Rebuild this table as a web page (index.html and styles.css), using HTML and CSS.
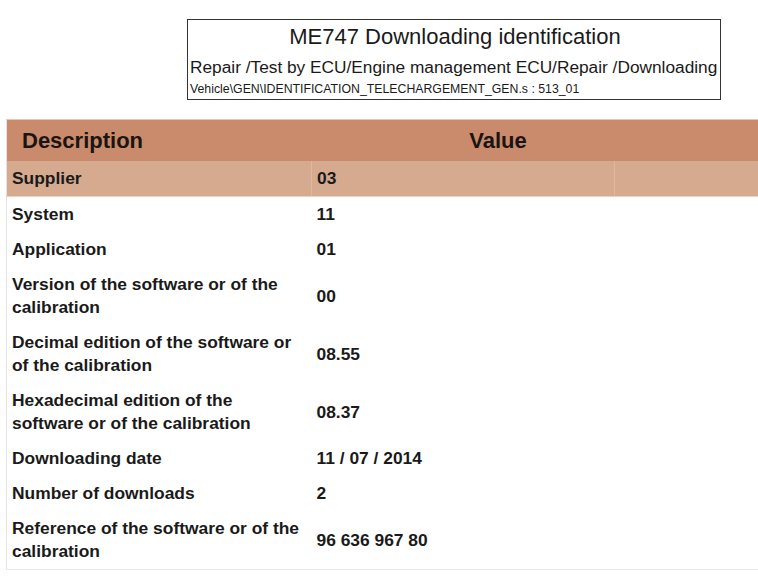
FILE: index.html
```html
<!DOCTYPE html>
<html>
<head>
<meta charset="utf-8">
<link rel="stylesheet" href="styles.css">
</head>
<body>
<div class="titlebox">
  <div class="title">ME747 Downloading identification</div>
  <div class="path">Repair /Test by ECU/Engine management ECU/Repair /Downloading</div>
  <div class="file">Vehicle\GEN\IDENTIFICATION_TELECHARGEMENT_GEN.s : 513_01</div>
</div>
<table class="data">
  <colgroup>
    <col class="col-desc">
    <col class="col-val">
    <col class="col-extra">
  </colgroup>
  <thead>
    <tr>
      <th class="h-desc">Description</th>
      <th class="h-val" colspan="2">Value</th>
    </tr>
  </thead>
  <tbody>
    <tr class="hl"><td class="c1">Supplier</td><td class="c2">03</td><td class="c3"></td></tr>
    <tr><td class="c1">System</td><td class="c2">11</td><td class="c3"></td></tr>
    <tr><td class="c1">Application</td><td class="c2">01</td><td class="c3"></td></tr>
    <tr><td class="c1">Version of the software or of the calibration</td><td class="c2">00</td><td class="c3"></td></tr>
    <tr><td class="c1">Decimal edition of the software or of the calibration</td><td class="c2">08.55</td><td class="c3"></td></tr>
    <tr><td class="c1">Hexadecimal edition of the software or of the calibration</td><td class="c2">08.37</td><td class="c3"></td></tr>
    <tr><td class="c1">Downloading date</td><td class="c2">11 / 07 / 2014</td><td class="c3"></td></tr>
    <tr><td class="c1">Number of downloads</td><td class="c2">2</td><td class="c3"></td></tr>
    <tr><td class="c1">Reference of the software or of the calibration</td><td class="c2">96 636 967 80</td><td class="c3"></td></tr>
  </tbody>
</table>
</body>
</html>
```
FILE: styles.css
```css
html, body {
  margin: 0;
  padding: 0;
  background: #ffffff;
  overflow: hidden;
}
body {
  font-family: "Liberation Sans", Arial, sans-serif;
  color: #111;
  padding-top: 19px;
}
.titlebox {
  box-sizing: border-box;
  margin-left: 187px;
  width: 534px;
  height: 81px;
  border: 1px solid #333;
  padding: 4px 0 3px 2px;
}
.title {
  font-size: 22px;
  line-height: 26px;
  text-align: center;
  color: #1a1a1a;
}
.path {
  font-size: 17.3px;
  line-height: 20px;
  margin-top: 7px;
  white-space: nowrap;
  color: #1a1a1a;
}
.file {
  font-size: 12.3px;
  line-height: 14px;
  margin-top: 5px;
  white-space: nowrap;
  color: #1a1a1a;
}
.data {
  margin-top: 19px;
  margin-left: 6px;
  width: 760px;
  border-collapse: collapse;
  table-layout: fixed;
  border-left: 1px solid #e4e4e4;
  border-bottom: 1px solid #e8e8e8;
}
.col-desc { width: 305px; }
.col-val { width: 303px; }
.col-extra { width: 152px; }
.data th {
  background: #c98b6b;
  font-size: 22px;
  line-height: 25px;
  padding: 8px 0;
  font-weight: bold;
  color: #1b1410;
  border-top: 1px solid #e9c7b2;
}
.h-desc {
  text-align: left;
  padding-left: 15px !important;
}
.h-val {
  text-align: center;
  padding-right: 82px !important;
}
.data td {
  font-size: 17.4px;
  line-height: 23px;
  padding: 6px 8px 6px 5px;
  font-weight: bold;
  color: #1a1a1a;
  vertical-align: middle;
}
.hl td {
  background: #d6aa8f;
  border-bottom: 1px solid #ecd2c2;
}
.hl .c2, .hl .c3 {
  border-left: 1px solid #dcb8a2;
}
```
